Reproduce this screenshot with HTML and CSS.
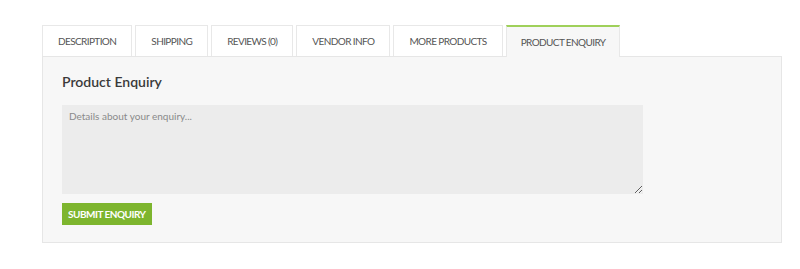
FILE: index.html
```html
<!DOCTYPE html>
<html>
<head>
<meta charset="utf-8">
<link rel="stylesheet" href="styles.css">
</head>
<body>
<div class="wrap">
  <ul class="tabs">
    <li class="tab">DESCRIPTION</li>
    <li class="tab">SHIPPING</li>
    <li class="tab">REVIEWS (0)</li>
    <li class="tab">VENDOR INFO</li>
    <li class="tab">MORE PRODUCTS</li>
    <li class="tab active">PRODUCT ENQUIRY</li>
  </ul>
  <div class="panel">
    <h2 class="title">Product Enquiry</h2>
    <textarea class="field" placeholder="Details about your enquiry..."></textarea>
    <button class="submit">SUBMIT ENQUIRY</button>
  </div>
</div>
</body>
</html>
```
FILE: styles.css
```css
html, body { margin: 0; padding: 0; background: #fff; }
body { font-family: Lato, "Open Sans", sans-serif; color: #555; }
.wrap { padding: 25px 0 0 42px; width: 740px; }
.tabs { list-style: none; margin: 0; padding: 0; display: flex; gap: 3px; position: relative; z-index: 1; }
.tab {
  height: 31px; box-sizing: border-box; padding: 0 15px;
  border: 1px solid #e8e8e8; border-bottom: 0; background: #fff;
  font-size: 10px; color: #555; display: flex; align-items: center; justify-content: center;
  letter-spacing: -0.6px; white-space: nowrap;
}
.tab.active { background: #f7f7f7; border-top: 2px solid #9fd05a; height: 32px; margin-bottom: -1px; padding: 0 14px; }
.panel {
  background: #f7f7f7; border: 1px solid #e6e6e6; height: 187px; box-sizing: border-box;
  padding: 15px 19px 0; display: flex; flex-direction: column; align-items: flex-start;
}
.title { margin: 0 0 13px; font-size: 14px; font-weight: 600; color: #3a3a3a; line-height: 20px; }
.field {
  width: 581px; height: 89px; box-sizing: border-box; border: 0; background: #ececec;
  padding: 5px 7px; font-family: inherit; font-size: 10px; margin: 0 0 9px; resize: vertical; outline: none;
}
.field::placeholder { color: #8a8a8a; }
.submit {
  background: #7db52e; color: #fff; border: 0; height: 22px; padding: 0 6px; white-space: nowrap;
  font-family: inherit; font-size: 10px; font-weight: 700; letter-spacing: -0.5px;
}
```
